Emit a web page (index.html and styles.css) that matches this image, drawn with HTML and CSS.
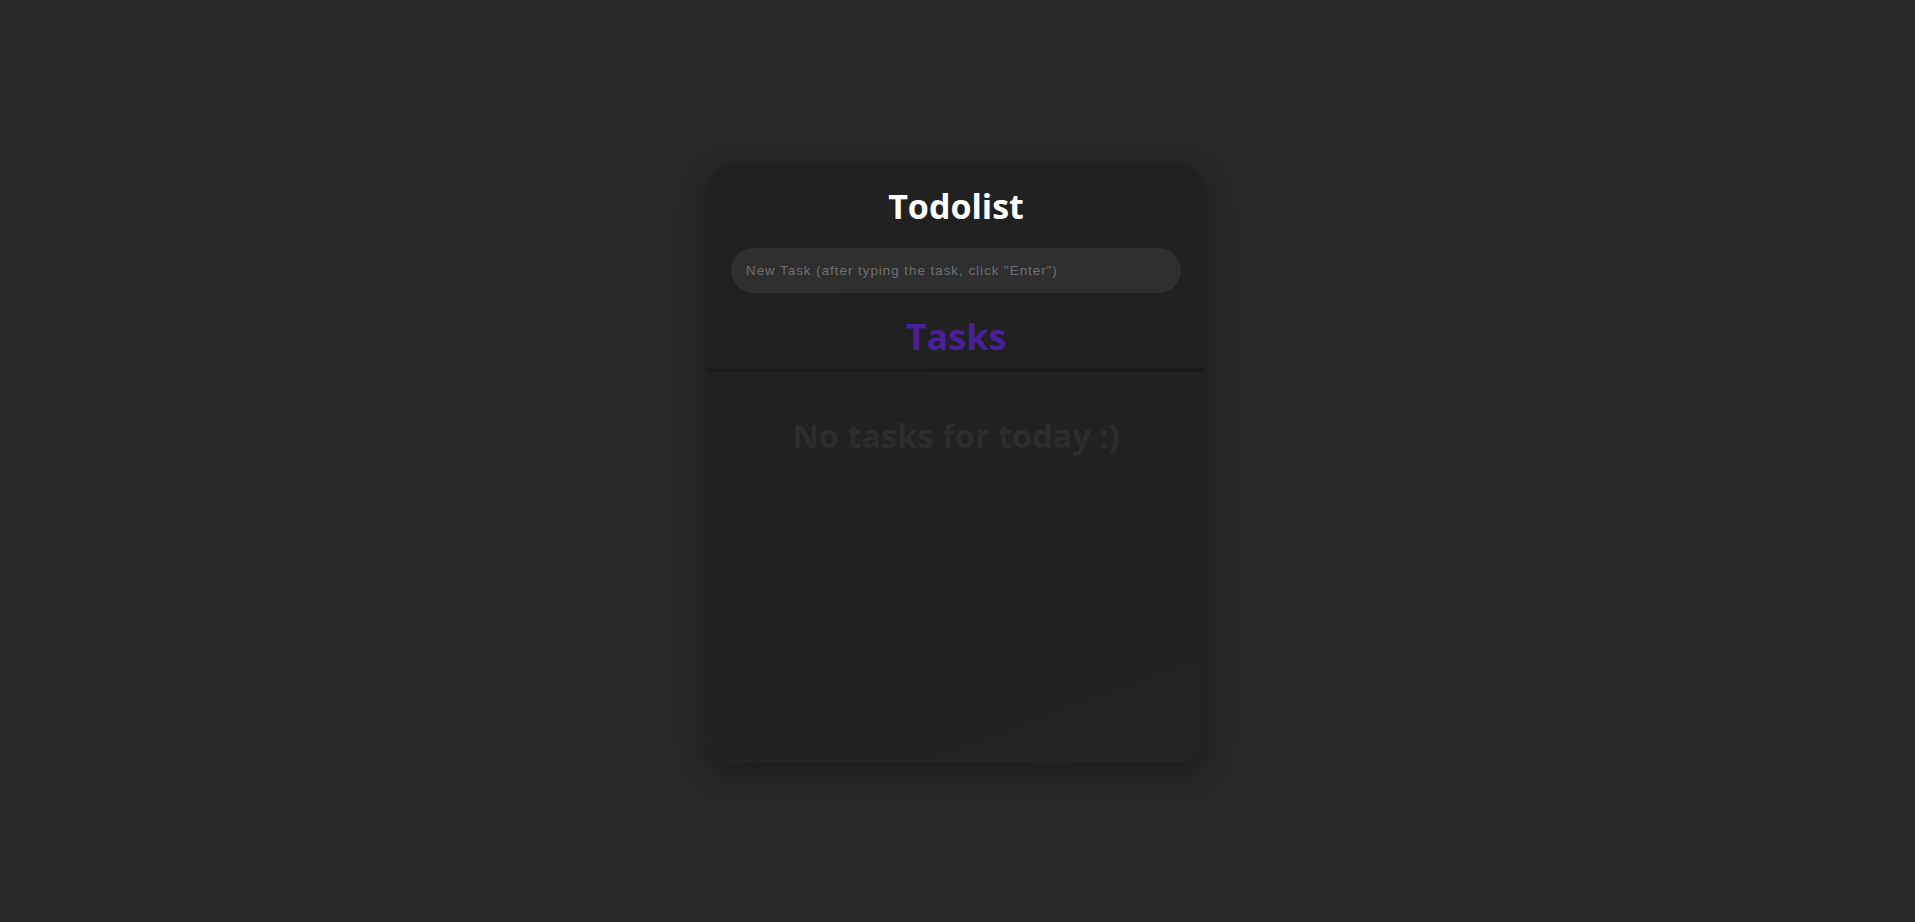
FILE: index.html
```html
<!DOCTYPE html>
<html lang="en">
<head>
<meta charset="utf-8">
<title>Todolist</title>
<link rel="stylesheet" href="styles.css">
</head>
<body>
<main class="card">
  <header class="card-head">
    <h1 class="title">Todolist</h1>
    <input class="task-input" type="text" placeholder="New Task (after typing the task, click &quot;Enter&quot;)">
    <h2 class="subtitle">Tasks</h2>
  </header>
  <section class="task-list">
    <p class="empty">No tasks for today :)</p>
  </section>
</main>
</body>
</html>
```
FILE: styles.css
```css
html, body {
  margin: 0;
  height: 100%;
}
body {
  box-sizing: border-box;
  padding: 4px 3px 0 0;
  background: #282828;
  display: flex;
  align-items: center;
  justify-content: center;
  font-family: "Open Sans", "Noto Sans", sans-serif;
}
.card {
  width: 500px;
  height: 600px;
  box-sizing: border-box;
  border-radius: 30px;
  background: linear-gradient(160deg, #202020 0%, #222222 60%, #232322 100%);
  box-shadow: 0 10px 30px rgba(0, 0, 0, 0.35);
  overflow: hidden;
  display: flex;
  flex-direction: column;
}
.card-head {
  padding: 23px 25px 9px;
  display: flex;
  flex-direction: column;
  align-items: stretch;
  border-bottom: 4px solid #1b1b1b;
}
.title {
  margin: 0;
  text-align: center;
  color: #ffffff;
  font-size: 34px;
  line-height: 40px;
  font-weight: 700;
}
.task-input {
  margin-top: 22px;
  height: 45px;
  box-sizing: border-box;
  border: none;
  outline: none;
  border-radius: 23px;
  background: #2f2f2f;
  padding: 0 15px;
  color: #d0d0d0;
  font-family: "Liberation Sans", Arial, sans-serif;
  font-size: 13.33px;
  letter-spacing: 1px;
}
.task-input::placeholder {
  color: #6f6f6f;
}
.subtitle {
  margin: 22px 0 0;
  text-align: center;
  color: #4a1f9c;
  font-size: 36px;
  line-height: 44px;
  font-weight: 700;
}
.task-list {
  flex: 1;
  padding-top: 44px;
}
.empty {
  margin: 0;
  text-align: center;
  color: #2d2d2d;
  font-size: 32.5px;
  line-height: 40px;
  font-weight: 700;
}
```
